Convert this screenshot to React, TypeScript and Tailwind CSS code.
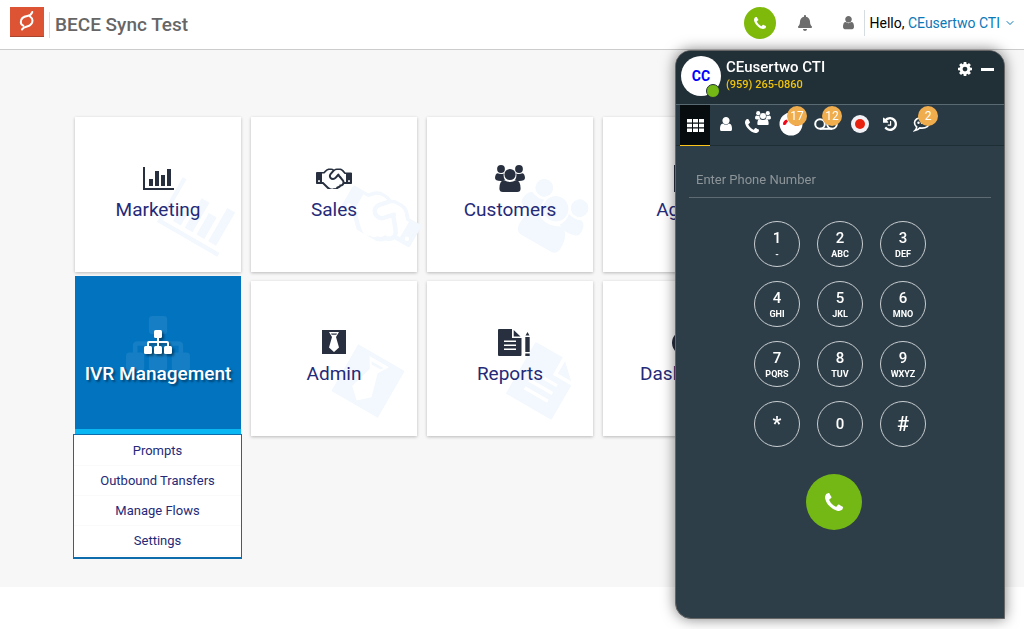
import React from "react";
import { FaBell } from "react-icons/fa";
import { ChevronDown } from "lucide-react";

type IconProps = { className?: string };

const PhoneIcon = ({ className }: IconProps) => (
  <svg viewBox="0 0 1408 1408" fill="currentColor" className={className} aria-hidden="true">
    <path d="M1408 1112q0 27-10 70.500t-21 68.500q-21 50-122 106-94 51-186 51-27 0-53-3.500t-57.500-12.500-47-14.500-55.500-20.500-49-18q-98-35-175-83-127-79-264-216t-216-264q-48-77-83-175-3-9-18-49t-20.500-55.500-14.500-47-12.500-57.500-3.500-53q0-92 51-186 56-101 106-122 25-11 68.500-21t70.500-10q14 0 21 3 18 6 53 76 11 19 30 54t35 63.500 31 53.500q3 4 17.500 25t21.500 35.500 7 28.500q0 20-28.500 50t-62 55-62 53-28.500 46q0 9 5 22.500t8.500 20.500 14 24 11.500 19q76 137 174 235t235 174q2 1 19 11.500t24 14 20.500 8.500 22.500 5q18 0 46-28.500t53-62 55-62 50-28.500q14 0 28.500 7t35.500 21.500 25 17.500q25 15 53.500 31t63.500 35 54 30q70 35 76 53 3 7 3 21z" />
  </svg>
);

const UserIcon = ({ className }: IconProps) => (
  <svg viewBox="0 0 1280 1536" fill="currentColor" className={className} aria-hidden="true">
    <path d="M1280 1271q0 109-62.500 187t-150.500 78H213q-88 0-150.500-78T0 1271q0-85 8.500-160.500t31.500-152 58.500-131 94-89T327 704q131 128 313 128t313-128q76 0 134.500 34.500t94 89 58.500 131 31.500 152 8.500 160.500zM1024 384q0 159-112.500 271.500T640 768 368.500 655.500 256 384t112.500-271.500T640 0t271.500 112.500T1024 384z" />
  </svg>
);

const GearIcon = ({ className }: IconProps) => (
  <svg viewBox="0 0 1536 1536" fill="currentColor" className={className} aria-hidden="true">
    <path d="M1024 768q0-106-75-181t-181-75-181 75-75 181 75 181 181 75 181-75 75-181zm512-109v222q0 12-8 23t-20 13l-185 28q-19 54-39 91 35 50 107 138 10 12 10 25t-9 23q-27 37-99 108t-94 71q-12 0-26-9l-138-108q-44 23-91 38-16 136-29 186-7 28-36 28H657q-14 0-24.500-8.500T621 1506l-28-184q-49-16-90-37l-141 107q-10 9-25 9-14 0-25-11-126-114-165-168-7-10-7-23 0-12 8-23 15-21 51-66.500t54-70.500q-27-50-41-99L29 913q-13-2-21-12.500T0 877V655q0-12 8-23t19-13l186-28q14-46 39-92-40-57-107-138-10-12-10-24 0-10 9-23 26-36 98.500-107.500T337 135q13 0 26 10l138 107q44-23 91-38 16-136 29-186 7-28 36-28h222q14 0 24.500 8.500T915 30l28 184q49 16 90 37l142-107q9-9 24-9 13 0 25 10 129 119 165 170 7 8 7 22 0 12-8 23-15 21-51 66.500t-54 70.500q26 50 41 98l183 28q13 2 21 12.500t8 23.500z" />
  </svg>
);

const HistoryIcon = ({ className }: IconProps) => (
  <svg viewBox="0 0 1536 1536" fill="currentColor" className={className} aria-hidden="true">
    <path d="M1536 768q0 156-61 298t-164 245-245 164-298 61q-172 0-327-72.500T177 1259q-7-10-6.500-22.500t8.500-20.500l137-138q10-9 25-9 16 2 23 12 73 95 179 147t225 52q104 0 198.500-40.500T1130 1130t109.500-163.500T1280 768t-40.500-198.500T1130 406 966.500 296.500 768 256q-98 0-188 35.500T420 393l137 138q31 30 14 69-17 40-59 40H64q-26 0-45-19T0 576V128q0-42 40-59 39-17 69 14l130 129Q346 111 483.500 55.500T768 0q156 0 298 61t245 164 164 245 61 298zM896 480v448q0 14-9 23t-23 9H544q-14 0-23-9t-9-23v-64q0-14 9-23t23-9h224V480q0-14 9-23t23-9h64q14 0 23 9t9 23z" />
  </svg>
);

const HandshakeIcon = ({ className }: IconProps) => (
  <svg viewBox="0 256 2304 1344" fill="currentColor" className={className} aria-hidden="true">
    <path d="M192 1152q40 0 56-32t0-64-56-32-56 32 0 64 56 32zM1665 1094q-10-13-38.500-50t-41.500-54-38-49-42.500-53-40.500-47-45-49l-125 140q-83 94-208.500 92t-205.500-98q-57-69-56.500-158t58.500-157l177-206q-22-11-51-16.500t-47.500-6-56.500.5-49 1q-92 0-158 66l-158 158H384v544q5 0 21-.5t22 0 19.500 2 20.500 4.500 17.500 8.500 18.500 13.500l297 292q115 111 227 111 78 0 125-47 57 20 112.500-8t72.500-85q74 6 127-44 20-18 36-45.500t14-50.500q10 10 43 10 43 0 77-21t49.500-53 12-71.500-30.500-73.500zM1824 1152h96V640h-93l-157-180q-66-76-169-76h-167q-89 0-146 67l-209 243q-28 33-28 75t27 75q43 51 110 52t111-49l193-218q25-23 53.500-21.500t47 27 8.500 56.500q16 19 56 63t60 68q29 36 82.500 105.500t64.500 84.500q52 66 60 140zM2112 1152q40 0 56-32t0-64-56-32-56 32 0 64 56 32zM2304 576v640q0 26-19 45t-45 19h-434q-27 65-82 106.500t-125 51.500q-33 48-80.500 81.500t-102.500 45.500q-42 53-104.500 81.500t-128.500 24.500q-60 34-126 39.500t-127.500-14-117-53.500-103.500-81l-287-282H64q-26 0-45-19t-19-45V576q0-26 19-45t45-19h421q14-14 47-48t47.500-48 44-40 50.500-37.500 51-25.500 62-19.500 68-5.500h117q99 0 181 56 82-56 181-56h167q35 0 67 6t56.500 14.500 51.500 26.500 44.500 31 43 39.500 39 42 41 48 41.500 48.500h355q26 0 45 19t19 45z" />
  </svg>
);

const ChartIcon = ({ className }: IconProps) => (
  <svg viewBox="0 0 31 23" fill="currentColor" className={className} aria-hidden="true">
    <path d="M0 0h2v21h29v2H0zM6 12h4v7H6zM12 4h4v15h-4zM18 8h4v11h-4zM24 2h4v17h-4z" />
  </svg>
);

const GroupIcon = ({ className }: IconProps) => (
  <svg viewBox="0 0 30 27" fill="currentColor" className={className} aria-hidden="true">
    <circle cx="6" cy="4" r="3.900" />
    <circle cx="24" cy="4" r="3.900" />
    <circle cx="15" cy="9.500" r="5.600" />
    <path d="M2.500 8.300q3.500 1.500 6.300.2-.8 3.500 1.200 6.200-1.800.3-3.300 1.300-6.700.2-6.700-3Q.200 9 2.500 8.300zM27.500 8.300q-3.500 1.500-6.300.2.800 3.500-1.200 6.200 1.800.3 3.300 1.300 6.700.2 6.700-3-.200-4-2.500-4.700zM9 15q6 3.800 12 0 4.600.8 4.600 8.500 0 3.500-3.400 3.500H7.800Q4.400 27 4.400 23.500 4.400 15.800 9 15z" />
  </svg>
);

const TieIcon = ({ className }: IconProps) => (
  <svg viewBox="0 0 24 24" fill="currentColor" className={className} aria-hidden="true">
    <path fillRule="evenodd" d="M0 0h24v24H0zM7 2l3 5-3 10.500 5 4.500 5-4.500L14 7l3-5z" />
    <path d="M9 3.600h6l-.7 1.200H9.700z" />
  </svg>
);

const DocIcon = ({ className }: IconProps) => (
  <svg viewBox="0 0 24 27" fill="currentColor" className={className} aria-hidden="true">
    <path fillRule="evenodd" d="M1 0h13v9h9.500v17q0 1-1 1H1q-1 0-1-1V1q0-1 1-1zM6 11.500V13h12v-1.500zM6 15.500V17h12v-1.500zM6 19.500V21h12v-1.500z" />
    <path d="M15.700 1l6.800 6.400h-6.800z" />
  </svg>
);

const ReportIcon = ({ className }: IconProps) => (
  <svg viewBox="0 0 32 27" fill="currentColor" className={className} aria-hidden="true">
    <path fillRule="evenodd" d="M1 0h13v9h9.500v17q0 1-1 1H1q-1 0-1-1V1q0-1 1-1zM6 11.500V13h12v-1.500zM6 15.500V17h12v-1.500zM6 19.500V21h12v-1.500z" />
    <path d="M15.700 1l6.800 6.400h-6.800zM29.500 3l2 3.500h-4zM27.300 8h4.400v15h-4.400zM27.300 24.500h4.400V27h-4.400z" />
  </svg>
);

const SitemapIcon = ({ className }: IconProps) => (
  <svg viewBox="0 0 28 24" fill="currentColor" className={className} aria-hidden="true">
    <rect x="10" y="0" width="8" height="8" rx="1.500" />
    <rect x="0" y="16" width="8" height="8" rx="1.500" />
    <rect x="10" y="16" width="8" height="8" rx="1.500" />
    <rect x="20" y="16" width="8" height="8" rx="1.500" />
    <path d="M13 8h2v3h8q2 0 2 2v3h-2v-3h-8v3h-2v-3H5v3H3v-3q0-2 2-2h8z" />
  </svg>
);

const GaugeIcon = ({ className }: IconProps) => (
  <svg viewBox="0 0 28 24" fill="none" stroke="currentColor" strokeWidth="4" className={className} aria-hidden="true">
    <path d="M6 21a12 11 0 1 1 16 0zM14 16l4-7" />
  </svg>
);

const AgentIcon = ({ className }: IconProps) => (
  <svg viewBox="0 0 24 27" fill="currentColor" className={className} aria-hidden="true">
    <path fillRule="evenodd" d="M0 0h24v27H0zM8 9a4 4 0 0 0 8 0 4 4 0 0 0-8 0zM4 22h16q0-7-8-7t-8 7z" />
  </svg>
);

const VoicemailIcon = ({ className }: IconProps) => (
  <svg viewBox="0 0 24 12" fill="none" stroke="currentColor" strokeWidth="2" className={className} aria-hidden="true">
    <circle cx="6" cy="6" r="4.800" />
    <circle cx="18" cy="6" r="4.800" />
    <path d="M6 10.800h12" />
  </svg>
);

const ChatIcon = ({ className }: IconProps) => (
  <svg viewBox="0 0 18 16" className={className} aria-hidden="true">
    <path d="M9 1.500c4.300 0 7.500 2.300 7.500 5.300s-3.200 5.300-7.500 5.300q-1.100 0-2.100-.2Q5 14 2 14.500q1.500-1.500 1.700-3.500Q1.500 9.400 1.500 6.800c0-3 3.200-5.300 7.500-5.300z" fill="none" stroke="currentColor" strokeWidth="1.600" />
    <g fill="currentColor"><circle cx="5.500" cy="6.800" r="1.200" /><circle cx="9" cy="6.800" r="1.200" /><circle cx="12.500" cy="6.800" r="1.200" /></g>
  </svg>
);

const GridIcon = ({ className }: IconProps) => (
  <svg viewBox="0 0 17 13" fill="currentColor" className={className} aria-hidden="true">
    <path d="M0 0h5v3.500H0zM6 0h5v3.500H6zM12 0h5v3.500h-5zM0 4.700h5v3.500H0zM6 4.700h5v3.500H6zM12 4.700h5v3.500h-5zM0 9.400h5V13H0zM6 9.400h5V13H6zM12 9.400h5V13h-5z" />
  </svg>
);

const MissedCallIcon = ({ className }: IconProps) => (
  <svg viewBox="0 0 24 24" className={className} aria-hidden="true">
    <circle cx="12" cy="12" r="11.500" fill="#fff" />
    <path d="M4 12q0-3 3.500-4.500l1.500 2-1.500 1.500q0 2-3 2zM15 12q3 0 5 1l-1 1q-3 0-4-1z" fill="#f00718" />
  </svg>
);

type Tile = {
  label: string;
  Icon: React.ComponentType<IconProps>;
  size: string;
  Mark?: React.ComponentType<IconProps>;
  mark: string;
};

const tiles: Tile[] = [
  { label: "Marketing", Icon: ChartIcon, size: "w-[31px]", mark: "w-[70px]" },
  { label: "Sales", Icon: HandshakeIcon, size: "w-9", mark: "w-20" },
  { label: "Customers", Icon: GroupIcon, size: "w-[30px]", mark: "w-[68px]" },
  { label: "Agents", Icon: AgentIcon, size: "w-6", mark: "w-14" },
  { label: "IVR Management", Icon: SitemapIcon, size: "w-7", mark: "w-16" },
  { label: "Admin", Icon: TieIcon, size: "w-6", mark: "w-[54px]" },
  { label: "Reports", Icon: ReportIcon, size: "ml-2 w-8", Mark: DocIcon, mark: "w-[54px]" },
  { label: "Dashboard", Icon: GaugeIcon, size: "w-7", mark: "w-16" },
];

const submenu = ["Prompts", "Outbound Transfers", "Manage Flows", "Settings"];

const keys = [
  ["1", "-"], ["2", "ABC"], ["3", "DEF"],
  ["4", "GHI"], ["5", "JKL"], ["6", "MNO"],
  ["7", "PQRS"], ["8", "TUV"], ["9", "WXYZ"],
  ["*", ""], ["0", ""], ["#", ""],
];

function MenuTile({ tile }: { tile: Tile }) {
  const { label, Icon, size, mark } = tile;
  const Mark = tile.Mark ?? Icon;
  return (
    <a href="#" className="relative flex h-[155px] flex-col items-center bg-white pt-[45px] shadow-[0_1px_3px_rgba(0,0,0,0.25)]">
      <span className="absolute top-[60px] left-[90px] flex h-20 rotate-30 items-center text-[#f2f8fd]">
        <Mark className={mark} />
      </span>
      <span className="relative flex h-8 items-center text-[#28303f]"><Icon className={size} /></span>
      <span className="relative mt-0.5 text-[19px] leading-7 text-[#252a78]">{label}</span>
    </a>
  );
}

function ActiveTile({ tile }: { tile: Tile }) {
  return (
    <div className="relative -mt-[5px] self-start">
      <a href="#" className="relative flex h-[158px] flex-col items-center border-b-[5px] border-[#09b8f2] bg-[#0273bf] pt-[50px] text-white">
        <span className="absolute top-10 flex text-white/8"><SitemapIcon className="w-16" /></span>
        <span className="relative flex h-8 items-center drop-shadow-[2px_2px_1px_rgba(0,0,0,0.4)]"><SitemapIcon className="w-7" /></span>
        <span className="relative mt-0.5 text-[19px] leading-7 font-medium whitespace-nowrap [text-shadow:2px_2px_2px_rgba(0,0,0,0.4)]">{tile.label}</span>
      </a>
      <ul className="absolute top-full -right-px -left-0.5 border border-b-2 border-[#0d6cab] bg-white py-px">
        {submenu.map((item) => (
          <li key={item} className="border-b border-[#fafafa]">
            <a href="#" className="block text-center text-[13px] leading-[29px] text-[#252a78]">{item}</a>
          </li>
        ))}
      </ul>
    </div>
  );
}

function Tab({ label, width, badge, active, children }: { label: string; width: string; badge?: string; active?: boolean; children: React.ReactNode }) {
  return (
    <button
      type="button"
      aria-label={label}
      className={`relative flex h-[41px] shrink-0 items-center justify-center ${width} ${active ? "border-b border-[#fcc419] bg-[#070c0f]" : "pb-[3px]"}`}
    >
      {children}
      {badge && (
        <span className="absolute top-px left-1/2 -ml-1 flex size-5 items-center justify-center rounded-full bg-[#f0ad4e] text-xs">{badge}</span>
      )}
    </button>
  );
}

function SoftPhone() {
  return (
    <section aria-label="Phone" className="fixed top-[50px] right-[19px] h-[569px] w-[330px] overflow-hidden rounded-2xl rounded-br-none border border-[#666] bg-[#2d3e48] text-white shadow-[0_0_14px_rgba(0,0,0,0.5)]">
      <header className="flex h-[54px] items-start border-b border-[#5a6a72] bg-[#212f37] pl-[5px]">
        <div className="relative mt-[5px] flex size-10 items-center justify-center rounded-full bg-white text-sm font-bold text-[#0000ff]">
          CC
          <span className="absolute right-px -bottom-0.5 size-[14px] rounded-full border border-[#212f37] bg-[#74b816]" />
        </div>
        <div className="ml-[5px] flex-1 pt-[7px]">
          <h2 className="text-[15px] leading-[18px] font-medium">CEusertwo CTI</h2>
          <p className="text-[11px] leading-[18px] font-medium text-[#f0c40c]">(959) 265-0860</p>
        </div>
        <button type="button" aria-label="Settings" className="mt-[11px] mr-[9px]"><GearIcon className="size-[14px]" /></button>
        <button type="button" aria-label="Minimize" className="mt-[17px] mr-[10px] h-[3px] w-[13px] bg-white" />
      </header>
      <nav className="flex h-10 items-start bg-[#293a44] pl-1 shadow-[0_1px_0_#1f2d35]">
        <Tab label="Keypad" width="w-[30px]" active><GridIcon className="w-[17px]" /></Tab>
        <Tab label="Contacts" width="w-8"><UserIcon className="w-3" /></Tab>
        <Tab label="Conference" width="w-8">
          <PhoneIcon className="mt-1 size-[14px]" />
          <GroupIcon className="-ml-1 mb-3 w-4" />
        </Tab>
        <Tab label="Missed calls" width="w-[34px]" badge="17"><MissedCallIcon className="size-6" /></Tab>
        <Tab label="Voicemail" width="w-9" badge="12"><VoicemailIcon className="w-6" /></Tab>
        <Tab label="Record" width="w-8">
          <span className="flex size-[18px] items-center justify-center rounded-full bg-[#f2f2f6]"><span className="size-[10px] rounded-full bg-[#e8210f]" /></span>
        </Tab>
        <Tab label="History" width="w-7"><HistoryIcon className="size-[14px]" /></Tab>
        <Tab label="Messages" width="w-9" badge="2"><ChatIcon className="w-[18px]" /></Tab>
      </nav>
      <div className="px-[13px] pt-[17px]">
        <input
          type="tel"
          aria-label="Phone number"
          placeholder="Enter Phone Number"
          className="block h-9 w-full border-b border-[#5d6c74] bg-transparent px-[7px] text-[13px] outline-none placeholder:text-[#8d9599]"
        />
      </div>
      <div className="mt-[23px] grid grid-cols-[repeat(3,46px)] justify-center gap-x-[17px] gap-y-[14px]">
        {keys.map(([digit, letters]) => (
          <button
            key={digit}
            type="button"
            className={`flex h-[46px] flex-col items-center justify-center rounded-full border border-[#c8cdd0] font-medium ${letters ? "pt-[3px]" : ""}`}
          >
            <span className={letters || digit === "0" ? "text-[15px] leading-4" : "text-xl leading-5"}>{digit}</span>
            {letters && <span className="text-[9px] leading-4 font-bold">{letters}</span>}
          </button>
        ))}
      </div>
      <div className="mt-[27px] flex justify-center pr-3">
        <button type="button" aria-label="Call" className="flex size-14 items-center justify-center rounded-full bg-[#74b816]">
          <PhoneIcon className="size-[18px]" />
        </button>
      </div>
    </section>
  );
}

export default function App() {
  return (
    <div className="min-h-screen bg-white font-['Roboto',sans-serif]">
      <header className="flex h-[50px] items-center border-b border-[#ccc] bg-white pl-[10px]">
        <svg viewBox="0 0 34 30" className="mb-[5px] h-[30px] w-[34px]" role="img" aria-label="Logo">
          <path d="M0 0h34v30H0z" fill="#dc5433" />
          <path d="M0 29h34v1H0z" fill="#a8452f" />
          <path d="M22.300 5q-1 3.500-5 4-6.500 1-6.500 6 0 2.500 2.500 3.700M12 22.500q1-2 5-3 5.500-1.500 5.500-6 0-2.500-2.500-4" fill="none" stroke="#fff" strokeWidth="2" strokeLinecap="round" />
        </svg>
        <h1 className="ml-[5px] border-l border-[#ddd] pl-[5px] text-[19px] leading-[26px] font-medium text-[#666]">BECE Sync Test</h1>
        <div className="mr-2 mb-[3px] ml-auto flex items-center">
          <button type="button" aria-label="Call" className="flex size-8 items-center justify-center rounded-full bg-[#7fba0b] text-white">
            <PhoneIcon className="size-3" />
          </button>
          <button type="button" aria-label="Notifications" className="ml-[22px] text-[#6d6d6d]"><FaBell className="h-4 w-[14px]" /></button>
          <button type="button" aria-label="Profile" className="ml-[31px] text-[#6d6d6d]"><UserIcon className="w-[11px]" /></button>
          <button type="button" className="ml-[10px] flex items-center border-l border-[#d5dde2] pl-[5px] text-sm leading-[26px] text-black">
            <span>Hello, <span className="text-[#0b78b8]">CEusertwo CTI</span></span>
            <ChevronDown className="ml-1 size-3 text-[#0b78b8]" />
          </button>
        </div>
      </header>
      <main className="bg-[#f7f7f7] pt-[67px] pb-[151px] pl-[75px]">
        <nav className="grid grid-cols-[repeat(4,166px)] gap-x-[10px] gap-y-[9px]">
          {tiles.map((tile) =>
            tile.label === "IVR Management" ? <ActiveTile key={tile.label} tile={tile} /> : <MenuTile key={tile.label} tile={tile} />
          )}
        </nav>
      </main>
      <SoftPhone />
    </div>
  );
}
